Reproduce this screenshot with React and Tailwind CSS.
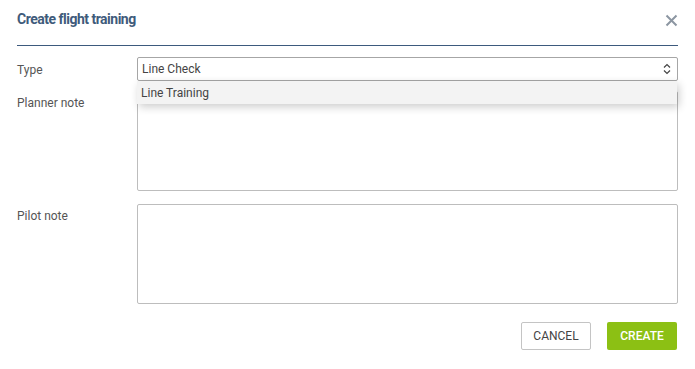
export default function App() {
  return (
    <div className="relative h-[369px] w-[695px] bg-white font-['Roboto',sans-serif] text-[12px] text-[#444]">
      <div className="mx-[17px] flex h-[46px] items-start justify-between border-b border-[#3d5a7d] pt-[10px]">
        <h1 className="text-[14px] font-bold leading-[18px] tracking-[-0.5px] text-[#3f5b7b]">Create flight training</h1>
        <svg width="13" height="13" viewBox="0 0 13 13" className="mt-[4px]">
          <path d="M1.5 1.5 L11.5 11.5 M11.5 1.5 L1.5 11.5" stroke="#8c96a2" strokeWidth="2" />
        </svg>
      </div>

      <div className="mx-[17px] mt-[11px] flex flex-col">
        <div className="flex">
          <label className="w-[120px] pt-[4px] text-[#555]">Type</label>
          <div className="relative flex-1">
            <div className="flex h-[24px] items-center justify-between rounded-[2px] border border-[#a6a6a6] pl-[4px] pr-[6px]">
              <span>Line Check</span>
              <svg width="8" height="12" viewBox="0 0 8 12">
                <path d="M1 4.5 L4 1.5 L7 4.5 M1 7.5 L4 10.5 L7 7.5" stroke="#444" strokeWidth="1.2" fill="none" />
              </svg>
            </div>
            <div className="absolute left-0 right-[1px] top-[24px] z-10 flex h-[23px] items-center bg-[#f3f3f3] pl-[4px] shadow-[2px_3px_8px_rgba(0,0,0,0.2)]">
              Line Training
            </div>
          </div>
        </div>

        <div className="mt-[10px] flex">
          <label className="w-[120px] pt-[3px] text-[#555]">Planner note</label>
          <textarea className="h-[100px] flex-1 resize-none rounded-[2px] border border-[#bdbdbd]" />
        </div>

        <div className="mt-[13px] flex">
          <label className="w-[120px] pt-[3px] text-[#555]">Pilot note</label>
          <textarea className="h-[100px] flex-1 resize-none rounded-[2px] border border-[#bdbdbd]" />
        </div>

        <div className="mt-[18px] flex justify-end gap-[16px] pr-[1px]">
          <button className="h-[28px] w-[70px] rounded-[2px] border border-[#c4c4c4] bg-white text-[12px] text-[#444]">CANCEL</button>
          <button className="h-[28px] w-[70px] rounded-[2px] bg-[#8cc014] text-[12px] font-medium text-white">CREATE</button>
        </div>
      </div>
    </div>
  )
}
